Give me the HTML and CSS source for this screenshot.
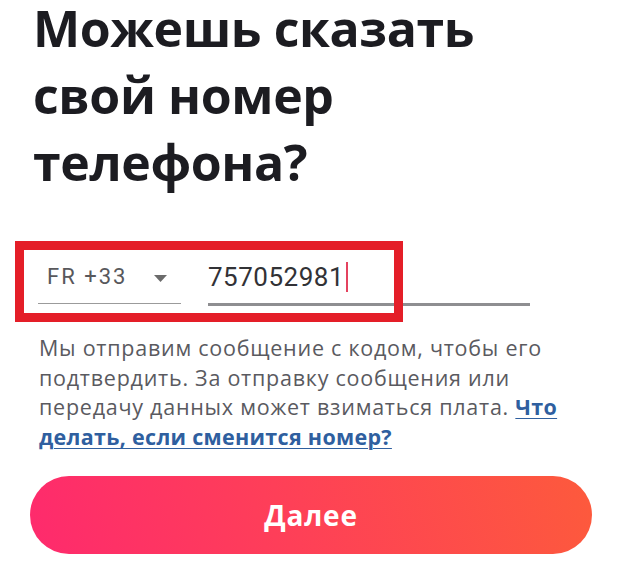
FILE: index.html
```html
<!DOCTYPE html>
<html lang="ru">
<head>
<meta charset="utf-8">
<title>Номер телефона</title>
<link rel="stylesheet" href="styles.css">
</head>
<body>
<main class="screen">
  <h1 class="title">Можешь сказать свой номер телефона?</h1>
  <div class="phone-row">
    <div class="country">
      <span class="country-code">FR +33</span>
      <svg class="dropdown" width="13" height="7" viewBox="0 0 13 7"><path d="M0 0 H13 L6.5 7 Z" fill="#6b6b6b"/></svg>
    </div>
    <div class="number">
      <span class="number-value">757052981</span><span class="caret"></span>
    </div>
    <div class="highlight"></div>
  </div>
  <p class="note">Мы отправим сообщение с кодом, чтобы его подтвердить. За отправку сообщения или передачу данных может взиматься плата. <a class="note-link" href="#">Что делать, если сменится номер?</a></p>
  <button class="next" type="button">Далее</button>
</main>
</body>
</html>
```

FILE: styles.css
```css
html, body {
  margin: 0;
  padding: 0;
  background: #ffffff;
}

.screen {
  width: 624px;
  height: 574px;
  overflow: hidden;
  font-family: "Open Sans", "Noto Sans", sans-serif;
}

.title {
  margin: 0 0 0 33px;
  position: relative;
  top: -5px;
  width: 500px;
  font-size: 50px;
  line-height: 67px;
  font-weight: 700;
  color: #1c1c21;
  letter-spacing: -0.4px;
}

.phone-row {
  position: relative;
  display: flex;
  align-items: flex-start;
  margin-top: 61px;
  font-family: "Roboto", "Noto Sans", sans-serif;
}

.country {
  display: flex;
  align-items: center;
  justify-content: space-between;
  box-sizing: border-box;
  width: 143px;
  margin-left: 38px;
  padding: 2px 14px 13px 9px;
  border-bottom: 1px solid #9b9b9b;
  font-size: 22px;
  line-height: 26px;
  letter-spacing: 2px;
  color: #58585c;
}

.dropdown {
  display: block;
  margin-top: 3px;
}

.number {
  display: flex;
  align-items: center;
  box-sizing: border-box;
  width: 322px;
  margin-left: 27px;
  padding-bottom: 11px;
  border-bottom: 3px solid #8e8e91;
  font-size: 26px;
  line-height: 30px;
  letter-spacing: 0.5px;
  color: #323236;
}

.caret {
  display: block;
  width: 2px;
  height: 30px;
  margin-left: 2px;
  background: #e4435f;
}

.highlight {
  position: absolute;
  left: 15px;
  top: -21px;
  width: 388px;
  height: 81px;
  box-sizing: border-box;
  border: 9px solid #e41e28;
  z-index: 2;
}

.note {
  margin: 27px 0 0 39px;
  width: 530px;
  font-size: 21.5px;
  line-height: 29.5px;
  letter-spacing: 0.75px;
  color: #5a5a5f;
}

.note-link {
  color: #2f5f9f;
  font-weight: 700;
  letter-spacing: 0.3px;
  text-decoration: underline;
  text-decoration-thickness: 1px;
  text-underline-offset: 3px;
}

.next {
  display: block;
  margin: 25px 0 0 30px;
  width: 562px;
  height: 78px;
  border: none;
  border-radius: 39px;
  background: linear-gradient(75deg, #fe2a6d 0%, #fe3f58 45%, #fd5a3c 100%);
  color: #ffffff;
  font-family: "Open Sans", "Noto Sans", sans-serif;
  font-size: 28px;
  font-weight: 700;
  letter-spacing: 0.8px;
  padding: 0;
}
```
